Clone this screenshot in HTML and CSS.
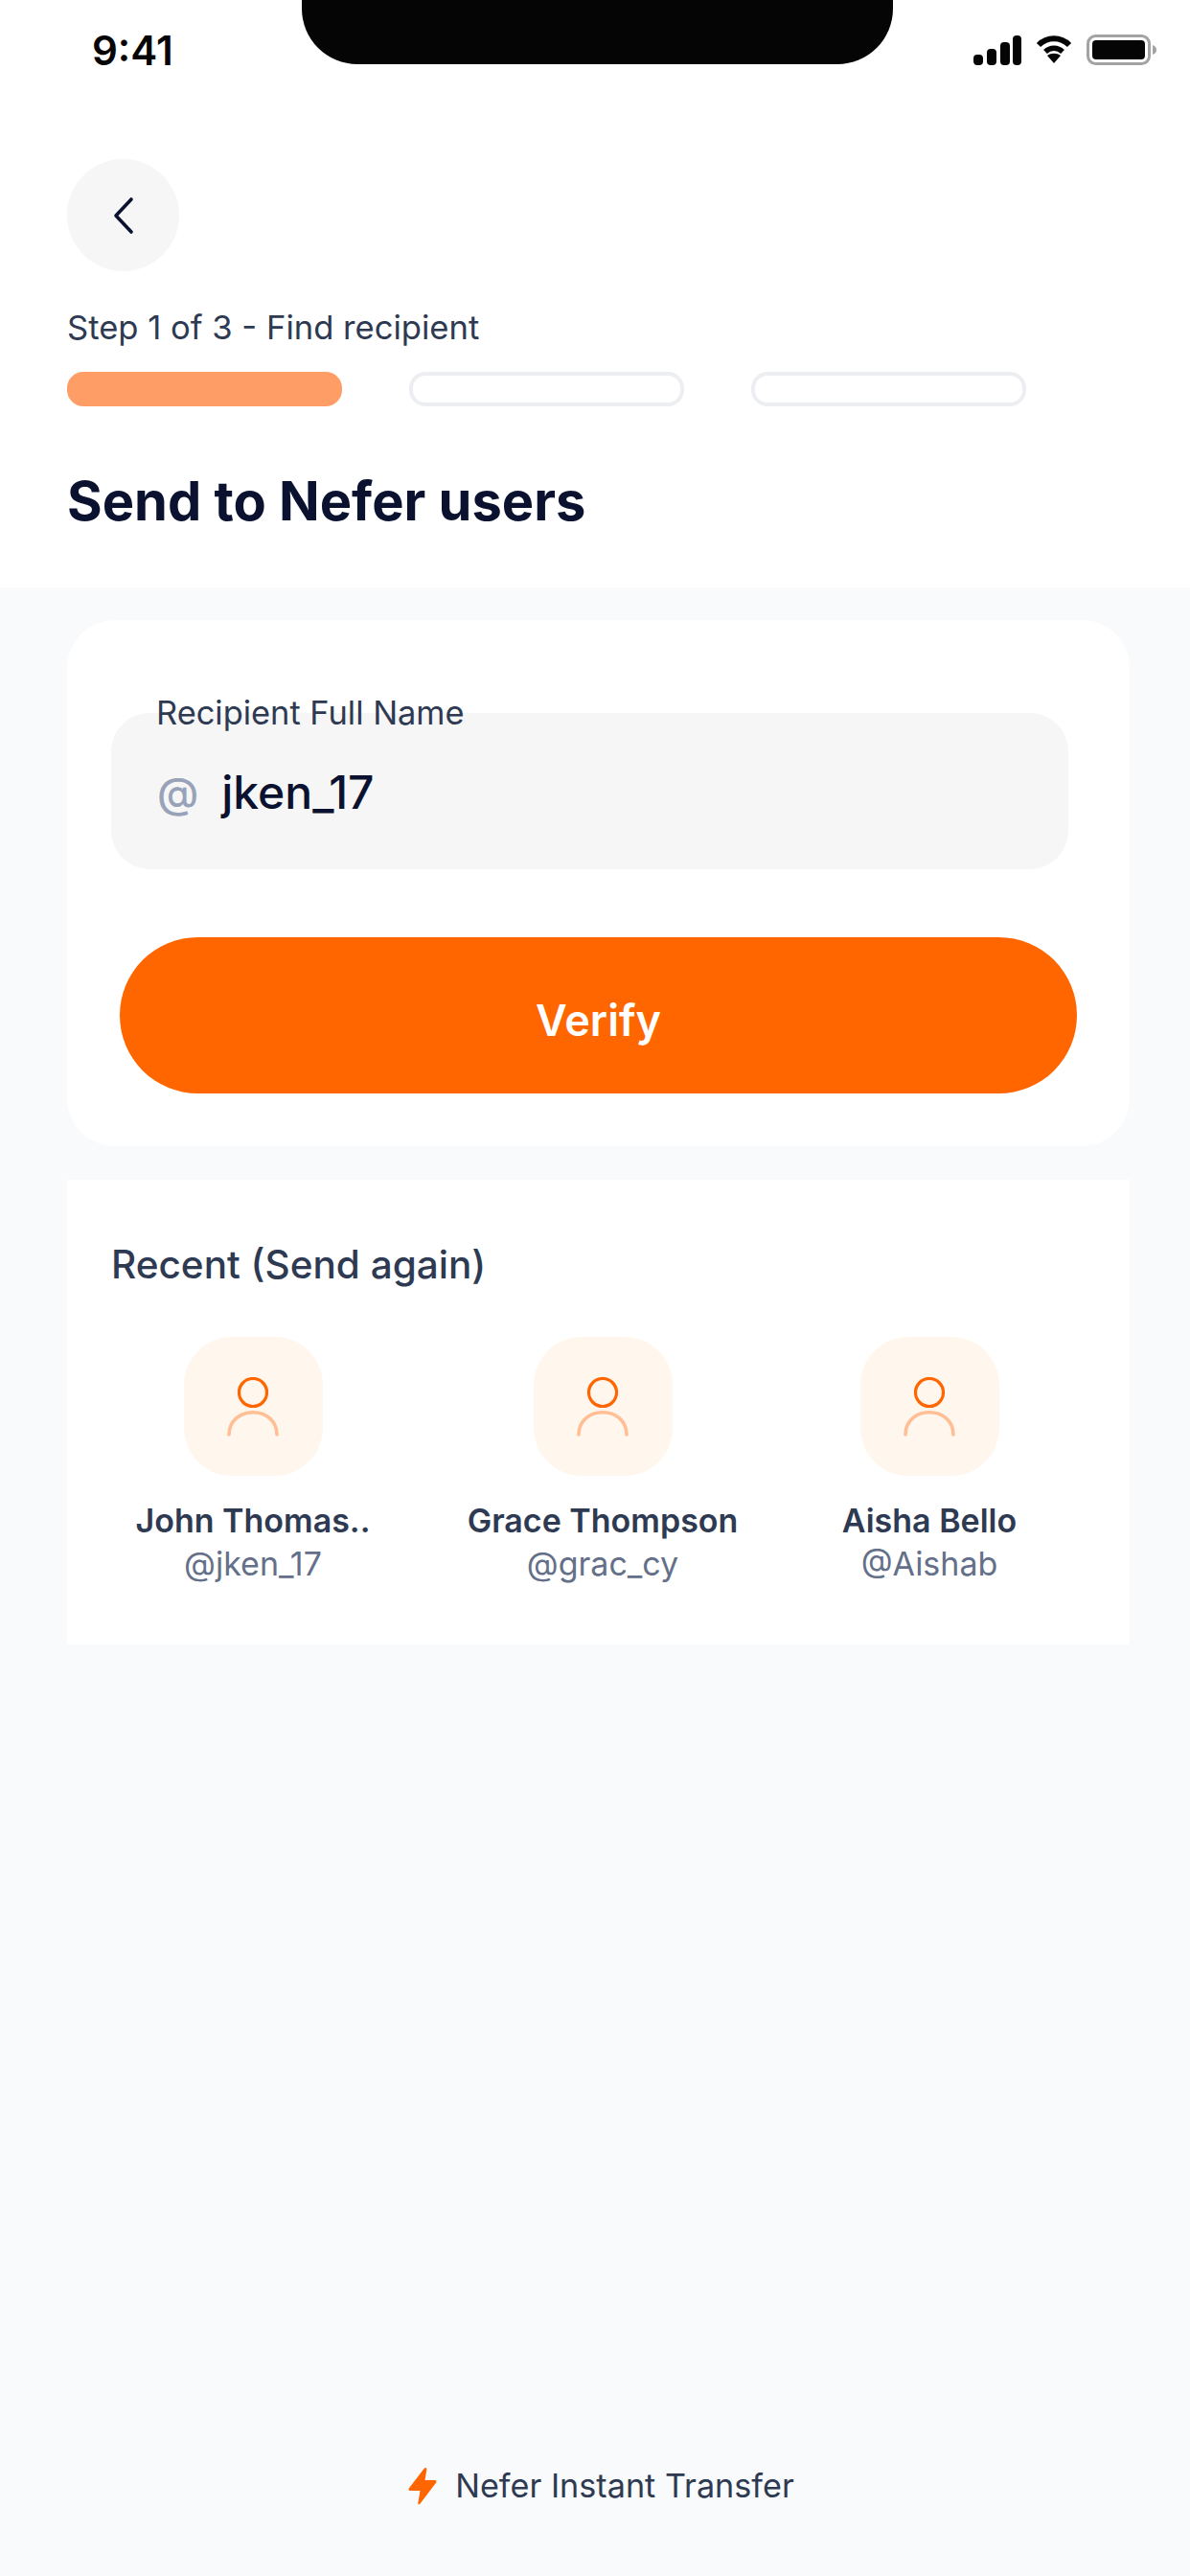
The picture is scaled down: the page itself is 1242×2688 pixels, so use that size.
FILE: index.html
```html
<!DOCTYPE html>
<html lang="en">
<head>
    <meta charset="UTF-8">
    <meta name="viewport" content="width=device-width, initial-scale=1.0">
    <title>Send to Nefer users</title>
    <link rel="stylesheet" href="styles.css">
</head>
<body>
    <div class="screen">
        <!-- Top white part -->
        <header class="top">
            <div class="notch"></div>
            <div class="statusBar">
                <span class="time">9:41</span>
                <div class="statusIcons">
                    <svg width="50" height="31" viewBox="0 0 50 31">
                        <rect x="0" y="20" width="10" height="11" rx="4" fill="#050505"/>
                        <rect x="14" y="14" width="10" height="17" rx="4" fill="#050505"/>
                        <rect x="28" y="7" width="10" height="24" rx="4" fill="#050505"/>
                        <rect x="41" y="0" width="9" height="31" rx="4" fill="#050505"/>
                    </svg>
                    <svg width="38" height="30" viewBox="0 0 38 30">
                        <path d="M3 10 C12 1 26 1 35 10" fill="none" stroke="#050505" stroke-width="6"/>
                        <path d="M10 17 C15 12 23 12 28 17" fill="none" stroke="#050505" stroke-width="5.5"/>
                        <path d="M12 21 C16 18 22 18 26 21 L19 29 Z" fill="#050505"/>
                    </svg>
                    <svg width="76" height="32" viewBox="0 0 76 32">
                        <rect x="1.5" y="1.5" width="64" height="29" rx="8" fill="none" stroke="#a3a3a3" stroke-width="3"/>
                        <rect x="6" y="6" width="55" height="20" rx="4" fill="#050505"/>
                        <path d="M69 11 C72 12 73 14 73 16 C73 18 72 20 69 21 Z" fill="#a3a3a3"/>
                    </svg>
                </div>
            </div>

            <button class="backBtn">
                <svg width="28" height="40" viewBox="0 0 28 40">
                    <path d="M22 3 L6 20 L22 37" fill="none" stroke="#0b1230" stroke-width="3.6" stroke-linecap="round" stroke-linejoin="round"/>
                </svg>
            </button>

            <p class="stepText">Step 1 of 3 - Find recipient</p>
            <div class="steps">
                <div class="step active"></div>
                <div class="step"></div>
                <div class="step"></div>
            </div>
            <h1 class="title">Send to Nefer users</h1>
        </header>

        <main class="content">
            <section class="card">
                <div class="field">
                    <span class="fieldLabel">Recipient Full Name</span>
                    <div class="fieldBox">
                        <span class="at">@</span>
                        <span class="fieldValue">jken_17</span>
                    </div>
                </div>
                <button class="verifyBtn">Verify</button>
            </section>

            <section class="recent">
                <h2 class="recentTitle">Recent (Send again)</h2>
                <div class="recentList">
                    <div class="person">
                        <div class="avatar">
                            <svg width="56" height="62" viewBox="0 0 56 62">
                                <circle cx="28" cy="16" r="14.5" fill="none" stroke="#ff6600" stroke-width="3.2"/>
                                <path d="M3 60 C3 29 53 29 53 60" fill="none" stroke="#ffbe94" stroke-width="3.6" stroke-linecap="round"/>
                            </svg>
                        </div>
                        <span class="name">John Thomas..</span>
                        <span class="handle">@jken_17</span>
                    </div>
                    <div class="person">
                        <div class="avatar">
                            <svg width="56" height="62" viewBox="0 0 56 62">
                                <circle cx="28" cy="16" r="14.5" fill="none" stroke="#ff6600" stroke-width="3.2"/>
                                <path d="M3 60 C3 29 53 29 53 60" fill="none" stroke="#ffbe94" stroke-width="3.6" stroke-linecap="round"/>
                            </svg>
                        </div>
                        <span class="name">Grace Thompson</span>
                        <span class="handle">@grac_cy</span>
                    </div>
                    <div class="person">
                        <div class="avatar">
                            <svg width="56" height="62" viewBox="0 0 56 62">
                                <circle cx="28" cy="16" r="14.5" fill="none" stroke="#ff6600" stroke-width="3.2"/>
                                <path d="M3 60 C3 29 53 29 53 60" fill="none" stroke="#ffbe94" stroke-width="3.6" stroke-linecap="round"/>
                            </svg>
                        </div>
                        <span class="name">Aisha Bello</span>
                        <span class="handle">@Aishab</span>
                    </div>
                </div>
            </section>

            <footer class="footer">
                <svg width="30" height="40" viewBox="0 0 30 40">
                    <path d="M18 1 C19 1 19.500 2 19.300 3 L17.500 14 L28 14 C29.500 14 30 15.500 29 16.800 L12.500 38.500 C11.500 39.800 10 39.200 10.300 37.700 L12.500 25 L2 25 C0.500 25 0 23.500 1 22.300 L16.500 2 C17 1.300 17.500 1 18 1 Z" fill="#ff6600"/>
                </svg>
                <span class="footerText">Nefer Instant Transfer</span>
            </footer>
        </main>
    </div>
</body>
</html>
```

FILE: styles.css
```css
* {
    box-sizing: border-box;
}

body {
    font-family: "Inter", "Open Sans", sans-serif;
    margin: 0;
    padding: 0;
    background-color: #f9fafc;
    color: #2e3a52;
}

.screen {
    display: flex;
    flex-direction: column;
    width: 1242px;
    height: 2688px;
    overflow: hidden;
}

/* Top part */
.top {
    position: relative;
    height: 613px;
    padding: 0 70px;
    background: #fff;
}

.notch {
    position: absolute;
    left: 315px;
    top: 0;
    width: 617px;
    height: 67px;
    background: #050505;
    border-radius: 0 0 58px 58px;
}

.statusBar {
    display: flex;
    justify-content: space-between;
    align-items: center;
    height: 104px;
    margin-right: -38px;
    padding-left: 26px;
}

.time {
    font-size: 42px;
    font-weight: 600;
    color: #050505;
}

.statusIcons {
    display: flex;
    align-items: center;
    gap: 15px;
}

.statusIcons svg {
    display: block;
}

.backBtn {
    display: flex;
    align-items: center;
    justify-content: center;
    width: 117px;
    height: 117px;
    margin-top: 62px;
    padding: 0;
    border: none;
    border-radius: 50%;
    background: #f6f6f6;
}

.stepText {
    margin: 36px 0 0;
    font-size: 34.6px;
    line-height: 44px;
    color: #2e3a52;
}

.steps {
    display: flex;
    gap: 70px;
    margin-top: 25px;
}

.step {
    width: 287px;
    height: 36px;
    border: 4px solid #eceef1;
    border-radius: 17px;
    background: #fff;
}

.step.active {
    border: none;
    background: #ff9d66;
}

.title {
    margin: 65px 0 0;
    font-size: 56px;
    line-height: 68px;
    font-weight: 700;
    color: #0b1230;
}

/* Content */
.content {
    flex-grow: 1;
    display: flex;
    flex-direction: column;
    padding: 34px 63px 0 70px;
}

.card {
    display: flex;
    flex-direction: column;
    height: 549px;
    padding: 97px 64px 0 46px;
    background: #fff;
    border-radius: 50px;
}

.field {
    position: relative;
    height: 163px;
}

.fieldLabel {
    position: absolute;
    left: 47px;
    top: -21px;
    font-size: 34.4px;
    line-height: 42px;
    color: #2e3a52;
}

.fieldBox {
    display: flex;
    align-items: center;
    gap: 24px;
    height: 163px;
    padding: 2px 48px 0;
    background: #f6f6f6;
    border-radius: 40px;
}

.at {
    font-size: 44px;
    font-weight: 500;
    color: #98a2b8;
}

.fieldValue {
    font-size: 48px;
    font-weight: 500;
    color: #0b1230;
}

.verifyBtn {
    width: 999px;
    height: 163px;
    margin: 71px 0 0 9px;
    padding: 10px 0 0;
    border: none;
    border-radius: 82px;
    background: #ff6600;
    color: #fff;
    font-family: inherit;
    font-size: 45px;
    font-weight: 600;
}

.recent {
    height: 485px;
    margin-top: 35px;
    padding: 64px 46px 0;
    background: #fff;
}

.recentTitle {
    margin: 0;
    font-size: 40.5px;
    line-height: 50px;
    font-weight: 500;
    color: #2e3a52;
}

.recentList {
    display: grid;
    grid-template-columns: 250px 290px 202px;
    column-gap: 95px;
    margin-top: 50px;
    padding-left: 23px;
}

.person {
    display: flex;
    flex-direction: column;
    align-items: center;
}

.avatar {
    display: flex;
    align-items: center;
    justify-content: center;
    width: 145px;
    height: 145px;
    background: #fff6ee;
    border-radius: 50px;
}

.name {
    margin-top: 26px;
    font-size: 34px;
    line-height: 42px;
    font-weight: 600;
    color: #2e3a52;
}

.handle {
    margin-top: 3px;
    font-size: 34px;
    line-height: 42px;
    color: #647089;
}

.footer {
    display: flex;
    align-items: center;
    justify-content: center;
    gap: 19px;
    margin: auto -63px 72px -70px;
    padding-left: 13px;
}

.footerText {
    font-size: 34.2px;
    line-height: 44px;
    color: #2e3a52;
}
```
